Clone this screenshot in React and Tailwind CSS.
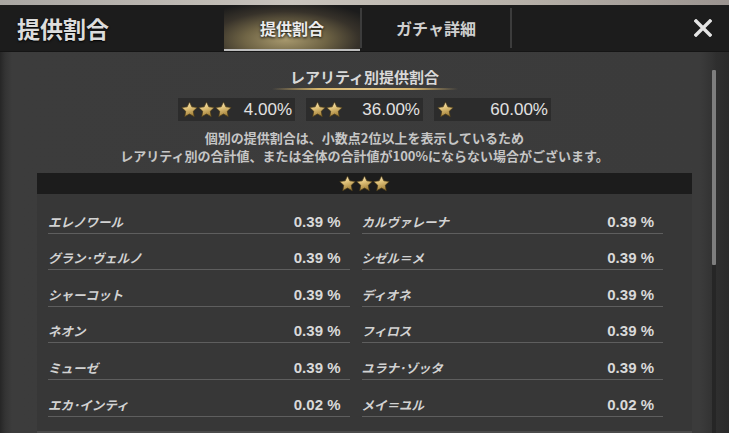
import React from "react";

const JP = { fontFamily: '"Noto Sans CJK JP", "Noto Sans", sans-serif' };
const NUM = { fontFamily: '"Liberation Sans", Arial, sans-serif' };

const Star = ({ s = 16 }) => (
  <svg width={s} height={s} viewBox="0 0 24 24" className="block">
    <defs>
      <linearGradient id="sg" x1="0" y1="0" x2="0.3" y2="1">
        <stop offset="0" stopColor="#fff6d6" />
        <stop offset="0.45" stopColor="#e6c880" />
        <stop offset="1" stopColor="#a6843c" />
      </linearGradient>
    </defs>
    <path
      d="M12 1.3L15.29 8.27L22.94 9.25L17.33 14.53L18.76 22.1L12 18.4L5.24 22.1L6.67 14.53L1.06 9.25L8.71 8.27Z"
      fill="url(#sg)"
      stroke="#4a3a18"
      strokeWidth="1"
      strokeLinejoin="round"
    />
  </svg>
);

const Stars = ({ n, s = 16 }) => (
  <div className="flex items-center">
    {Array.from({ length: n }).map((_, i) => (
      <Star key={i} s={s} />
    ))}
  </div>
);

const rows = [
  ["エレノワール", "0.39", "カルヴァレーナ", "0.39"],
  ["グラン･ヴェルノ", "0.39", "シゼル＝メ", "0.39"],
  ["シャーコット", "0.39", "ディオネ", "0.39"],
  ["ネオン", "0.39", "フィロス", "0.39"],
  ["ミューゼ", "0.39", "ユラナ･ゾッタ", "0.39"],
  ["エカ･インティ", "0.02", "メイ＝ユル", "0.02"],
];

const Cell = ({ name, pct }) => (
  <div className="h-[36.6px] flex items-end justify-between pb-[3px] pr-[9px] border-b border-[#5e5e5e]">
    <span className="text-[12.5px] leading-[16px] font-bold text-[#d2d2d2] italic" style={JP}>
      {name}
    </span>
    <span className="text-[15px] leading-[16px] font-bold text-[#d9d9d9]" style={NUM}>
      {pct} %
    </span>
  </div>
);

export default function App() {
  return (
    <div className="w-[729px] h-[433px] overflow-hidden flex flex-col bg-[#3b3b3b]">
      <div className="h-[5px] bg-[linear-gradient(to_right,#a9a6a2,#c9c4bd_40%,#b8b2aa_70%,#9b9490)]" />
      <div className="h-[47px] flex items-stretch bg-[#1c1c1c] border-b border-[#151515]">
        <div className="w-[224px] flex items-center pl-[17px]">
          <span
            className="text-[23px] font-bold text-[#dcdcdc] [text-shadow:0_1px_2px_#000]"
            style={JP}
          >
            提供割合
          </span>
        </div>
        <div className="w-[136px] relative flex items-center justify-center bg-[radial-gradient(ellipse_75%_85%_at_45%_75%,#a8996e_0%,#6f6445_40%,#37322a_72%,#1c1c1c_100%)]">
          <span
            className="text-[16px] font-bold text-[#ececec] [text-shadow:0_1px_3px_#000]"
            style={JP}
          >
            提供割合
          </span>
          <div className="absolute left-0 right-0 bottom-0 h-[2px] bg-[#bdbdbd]" />
        </div>
        <div className="w-[2px] my-[3px] bg-[#3c3c3c]" />
        <div className="w-[148px] flex items-center justify-center">
          <span className="text-[16px] font-bold text-[#cfcfcf]" style={JP}>
            ガチャ詳細
          </span>
        </div>
        <div className="w-[2px] my-[3px] bg-[#3c3c3c]" />
        <div className="flex-1 flex items-center justify-end pr-[17px]">
          <svg width="18" height="18" viewBox="0 0 18 18">
            <path d="M2 2L16 16M16 2L2 16" stroke="#e4e4e4" strokeWidth="3.4" strokeLinecap="square" />
          </svg>
        </div>
      </div>

      <div className="relative flex-1 flex flex-col items-center bg-[linear-gradient(to_right,#262626_0px,#333_5px,#3c3c3c_12px,#3b3b3b_700px,#333_712px,#2f2f2f_716px,#2a2a2a_729px)]">
        <div className="pt-[15px] text-[15px] leading-[20px] font-bold text-[#d8d8d8]" style={JP}>
          レアリティ別提供割合
        </div>
        <div className="mt-[1px] h-[2px] w-[186px] bg-[linear-gradient(to_right,transparent,#d6b46a_25%,#e6c888_50%,#d6b46a_75%,transparent)]" />

        <div className="mt-[8px] flex gap-[11px]">
          {[
            [3, "4.00%"],
            [2, "36.00%"],
            [1, "60.00%"],
          ].map(([n, t]) => (
            <div
              key={t}
              className="w-[117px] h-[23px] flex items-center justify-between px-[3px] bg-[#2c2c2c]"
            >
              <Stars n={n} s={17} />
              <span className="text-[17px] leading-[20px] text-[#e2e2e2]" style={NUM}>
                {t}
              </span>
            </div>
          ))}
        </div>

        <div
          className="mt-[8px] text-[13px] leading-[18px] font-bold text-[#c6c6c6] text-center"
          style={JP}
        >
          <div>個別の提供割合は、小数点2位以上を表示しているため</div>
          <div>レアリティ別の合計値、または全体の合計値が100%にならない場合がございます。</div>
        </div>

        <div className="mt-[8px] self-start ml-[37px] w-[655px] flex-1 flex flex-col bg-[#373737] border-b-2 border-[#4a4a4a]">
          <div className="h-[21px] flex items-center justify-center bg-[#1c1c1c]">
            <Stars n={3} s={17} />
          </div>
          <div className="pt-[3px] pl-[11px] pr-[29px] grid grid-cols-2 gap-x-[12px]">
            {rows.map((r) => (
              <React.Fragment key={r[0]}>
                <Cell name={r[0]} pct={r[1]} />
                <Cell name={r[2]} pct={r[3]} />
              </React.Fragment>
            ))}
          </div>
        </div>

        <div className="absolute left-[712px] top-[18px] bottom-0 w-[4px] bg-[#262626]">
          <div className="h-[195px] bg-[#7e7e7e] rounded-[1px]" />
        </div>
      </div>
    </div>
  );
}
